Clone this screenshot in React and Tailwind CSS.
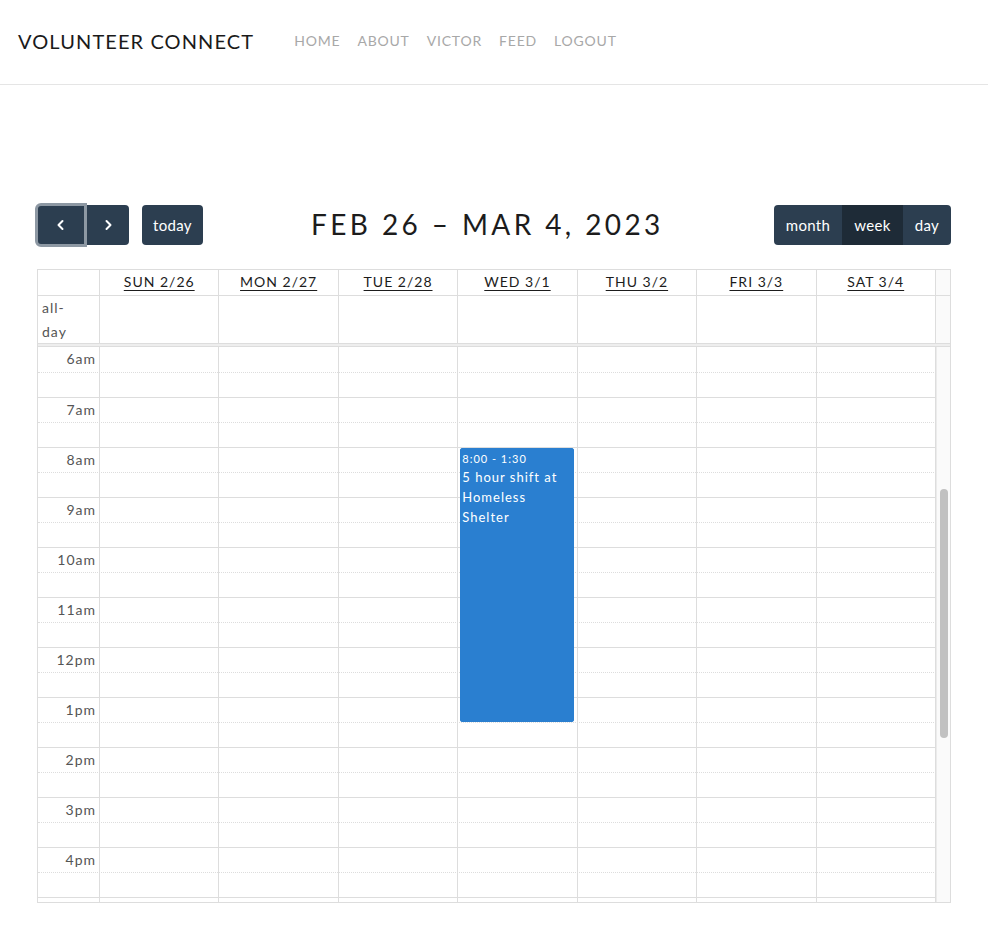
import React from "react";

const days = ["SUN 2/26", "MON 2/27", "TUE 2/28", "WED 3/1", "THU 3/2", "FRI 3/3", "SAT 3/4"];
const hours = ["6am", "7am", "8am", "9am", "10am", "11am", "12pm", "1pm", "2pm", "3pm", "4pm", ""];

function Chevron({ dir }) {
  return (
    <svg width="14" height="14" viewBox="0 0 14 14" fill="none">
      {dir === "left" ? (
        <path d="M8.5 3 L4.5 7 L8.5 11" stroke="white" strokeWidth="2" strokeLinecap="round" strokeLinejoin="round" />
      ) : (
        <path d="M5.5 3 L9.5 7 L5.5 11" stroke="white" strokeWidth="2" strokeLinecap="round" strokeLinejoin="round" />
      )}
    </svg>
  );
}

export default function App() {
  return (
    <div className="min-h-[942px] bg-white text-[#212529] font-['Lato','Noto_Sans',sans-serif]">
      {/* Navbar */}
      <nav className="h-[85px] border-b border-[#e5e5e5] flex items-center pl-[18px] pb-[2px]">
        <div className="text-[20px] tracking-[1.1px] text-[#1a1a1a] leading-none">VOLUNTEER CONNECT</div>
        <div className="flex items-center gap-[17px] ml-[40px] text-[14px] tracking-[0.8px] text-[#a8a8a8] leading-none">
          <span>HOME</span>
          <span>ABOUT</span>
          <span>VICTOR</span>
          <span>FEED</span>
          <span>LOGOUT</span>
        </div>
      </nav>

      {/* Calendar */}
      <div className="ml-[37px] w-[914px] pt-[120px]">
        {/* Toolbar */}
        <div className="flex items-center justify-between h-[40px]">
          <div className="flex items-center gap-[13px]">
            <div className="flex h-[40px]">
              <button className="w-[48px] h-[40px] bg-[#2c3e50] rounded-l-[4px] flex items-center justify-center outline outline-[3px] outline-[#8d98a3] -outline-offset-[1px] relative z-10">
                <Chevron dir="left" />
              </button>
              <button className="w-[44px] h-[40px] bg-[#2c3e50] rounded-r-[4px] flex items-center justify-center border-l border-[#34495c]">
                <Chevron dir="right" />
              </button>
            </div>
            <button className="h-[40px] px-[11px] bg-[#2c3e50] rounded-[4px] text-white text-[15px] tracking-[0.3px]">today</button>
          </div>
          <h2 className="text-[28px] leading-[36px] tracking-[3.4px] text-[#1c1c1c] mr-[2px] pb-[3px] font-normal">FEB 26 – MAR 4, 2023</h2>
          <div className="flex h-[40px] rounded-[4px] overflow-hidden text-white text-[15px] tracking-[0.3px]">
            <button className="w-[68px] bg-[#2c3e50]">month</button>
            <button className="w-[61px] bg-[#1e2b37]">week</button>
            <button className="w-[48px] bg-[#2c3e50]">day</button>
          </div>
        </div>

        {/* Grid */}
        <div className="mt-[24px] border border-[#dddddd] h-[634px] flex flex-col overflow-hidden">
          {/* header */}
          <div className="flex h-[26px] border-b border-[#dddddd] shrink-0">
            <div className="w-[62px] border-r border-[#dddddd]" />
            {days.map((d) => (
              <div key={d} className="flex-1 border-r border-[#dddddd] flex items-center justify-center text-[14px] tracking-[1px] underline underline-offset-[3px] text-[#1c1c1c] pb-[2px]">
                {d}
              </div>
            ))}
            <div className="w-[14px] bg-[#fafafa]" />
          </div>
          {/* all day */}
          <div className="flex h-[47px] shrink-0">
            <div className="w-[62px] border-r border-[#dddddd] text-[14px] leading-[24px] tracking-[1px] text-[#555] pl-[4px]">
              all-<br />day
            </div>
            {days.map((d) => (
              <div key={d} className="flex-1 border-r border-[#dddddd]" />
            ))}
            <div className="w-[14px] bg-[#fafafa]" />
          </div>
          {/* divider */}
          <div className="h-[4px] shrink-0 bg-[#eeeeee] border-t border-b border-[#dddddd]" />
          {/* body */}
          <div className="flex flex-1 overflow-hidden relative">
            <div className="flex-1 flex flex-col overflow-hidden relative">
              {hours.map((h, i) => (
                <div key={i} className="flex shrink-0">
                  <div className="flex-1 flex flex-col">
                    <div className={`flex h-[25px] ${i === 0 ? "" : "border-t border-[#dddddd]"}`}>
                      <div className="w-[62px] text-right pr-[4px] text-[14px] tracking-[1px] text-[#555] leading-[23px]">{h}</div>
                    </div>
                    <div className="h-[25px] border-t border-dotted border-[#dddddd]" />
                  </div>
                </div>
              ))}
              {/* column lines */}
              <div className="absolute inset-0 flex pointer-events-none">
                <div className="w-[62px] border-r border-[#dddddd]" />
                {days.map((d, i) => (
                  <div key={d} className="flex-1 border-r border-[#dddddd] relative">
                    {i === 3 && (
                      <div className="absolute left-[2px] right-[3px] top-[101px] h-[274px] bg-[#2a7fd0] rounded-[2px] border border-[#2a7fd0] text-white px-[1px] pt-[3px]">
                        <div className="text-[11px] leading-[14px] tracking-[1px]">8:00 - 1:30</div>
                        <div className="text-[13px] leading-[20px] tracking-[1px] mt-[1px]">5 hour shift at Homeless Shelter</div>
                      </div>
                    )}
                  </div>
                ))}
              </div>
            </div>
            {/* fake scrollbar */}
            <div className="w-[14px] bg-[#fafafa] border-l border-[#ebebeb] relative shrink-0">
              <div className="absolute left-[3px] w-[8px] top-[142px] h-[249px] rounded-full bg-[#c1c1c1]" />
            </div>
          </div>
        </div>
      </div>
    </div>
  );
}
